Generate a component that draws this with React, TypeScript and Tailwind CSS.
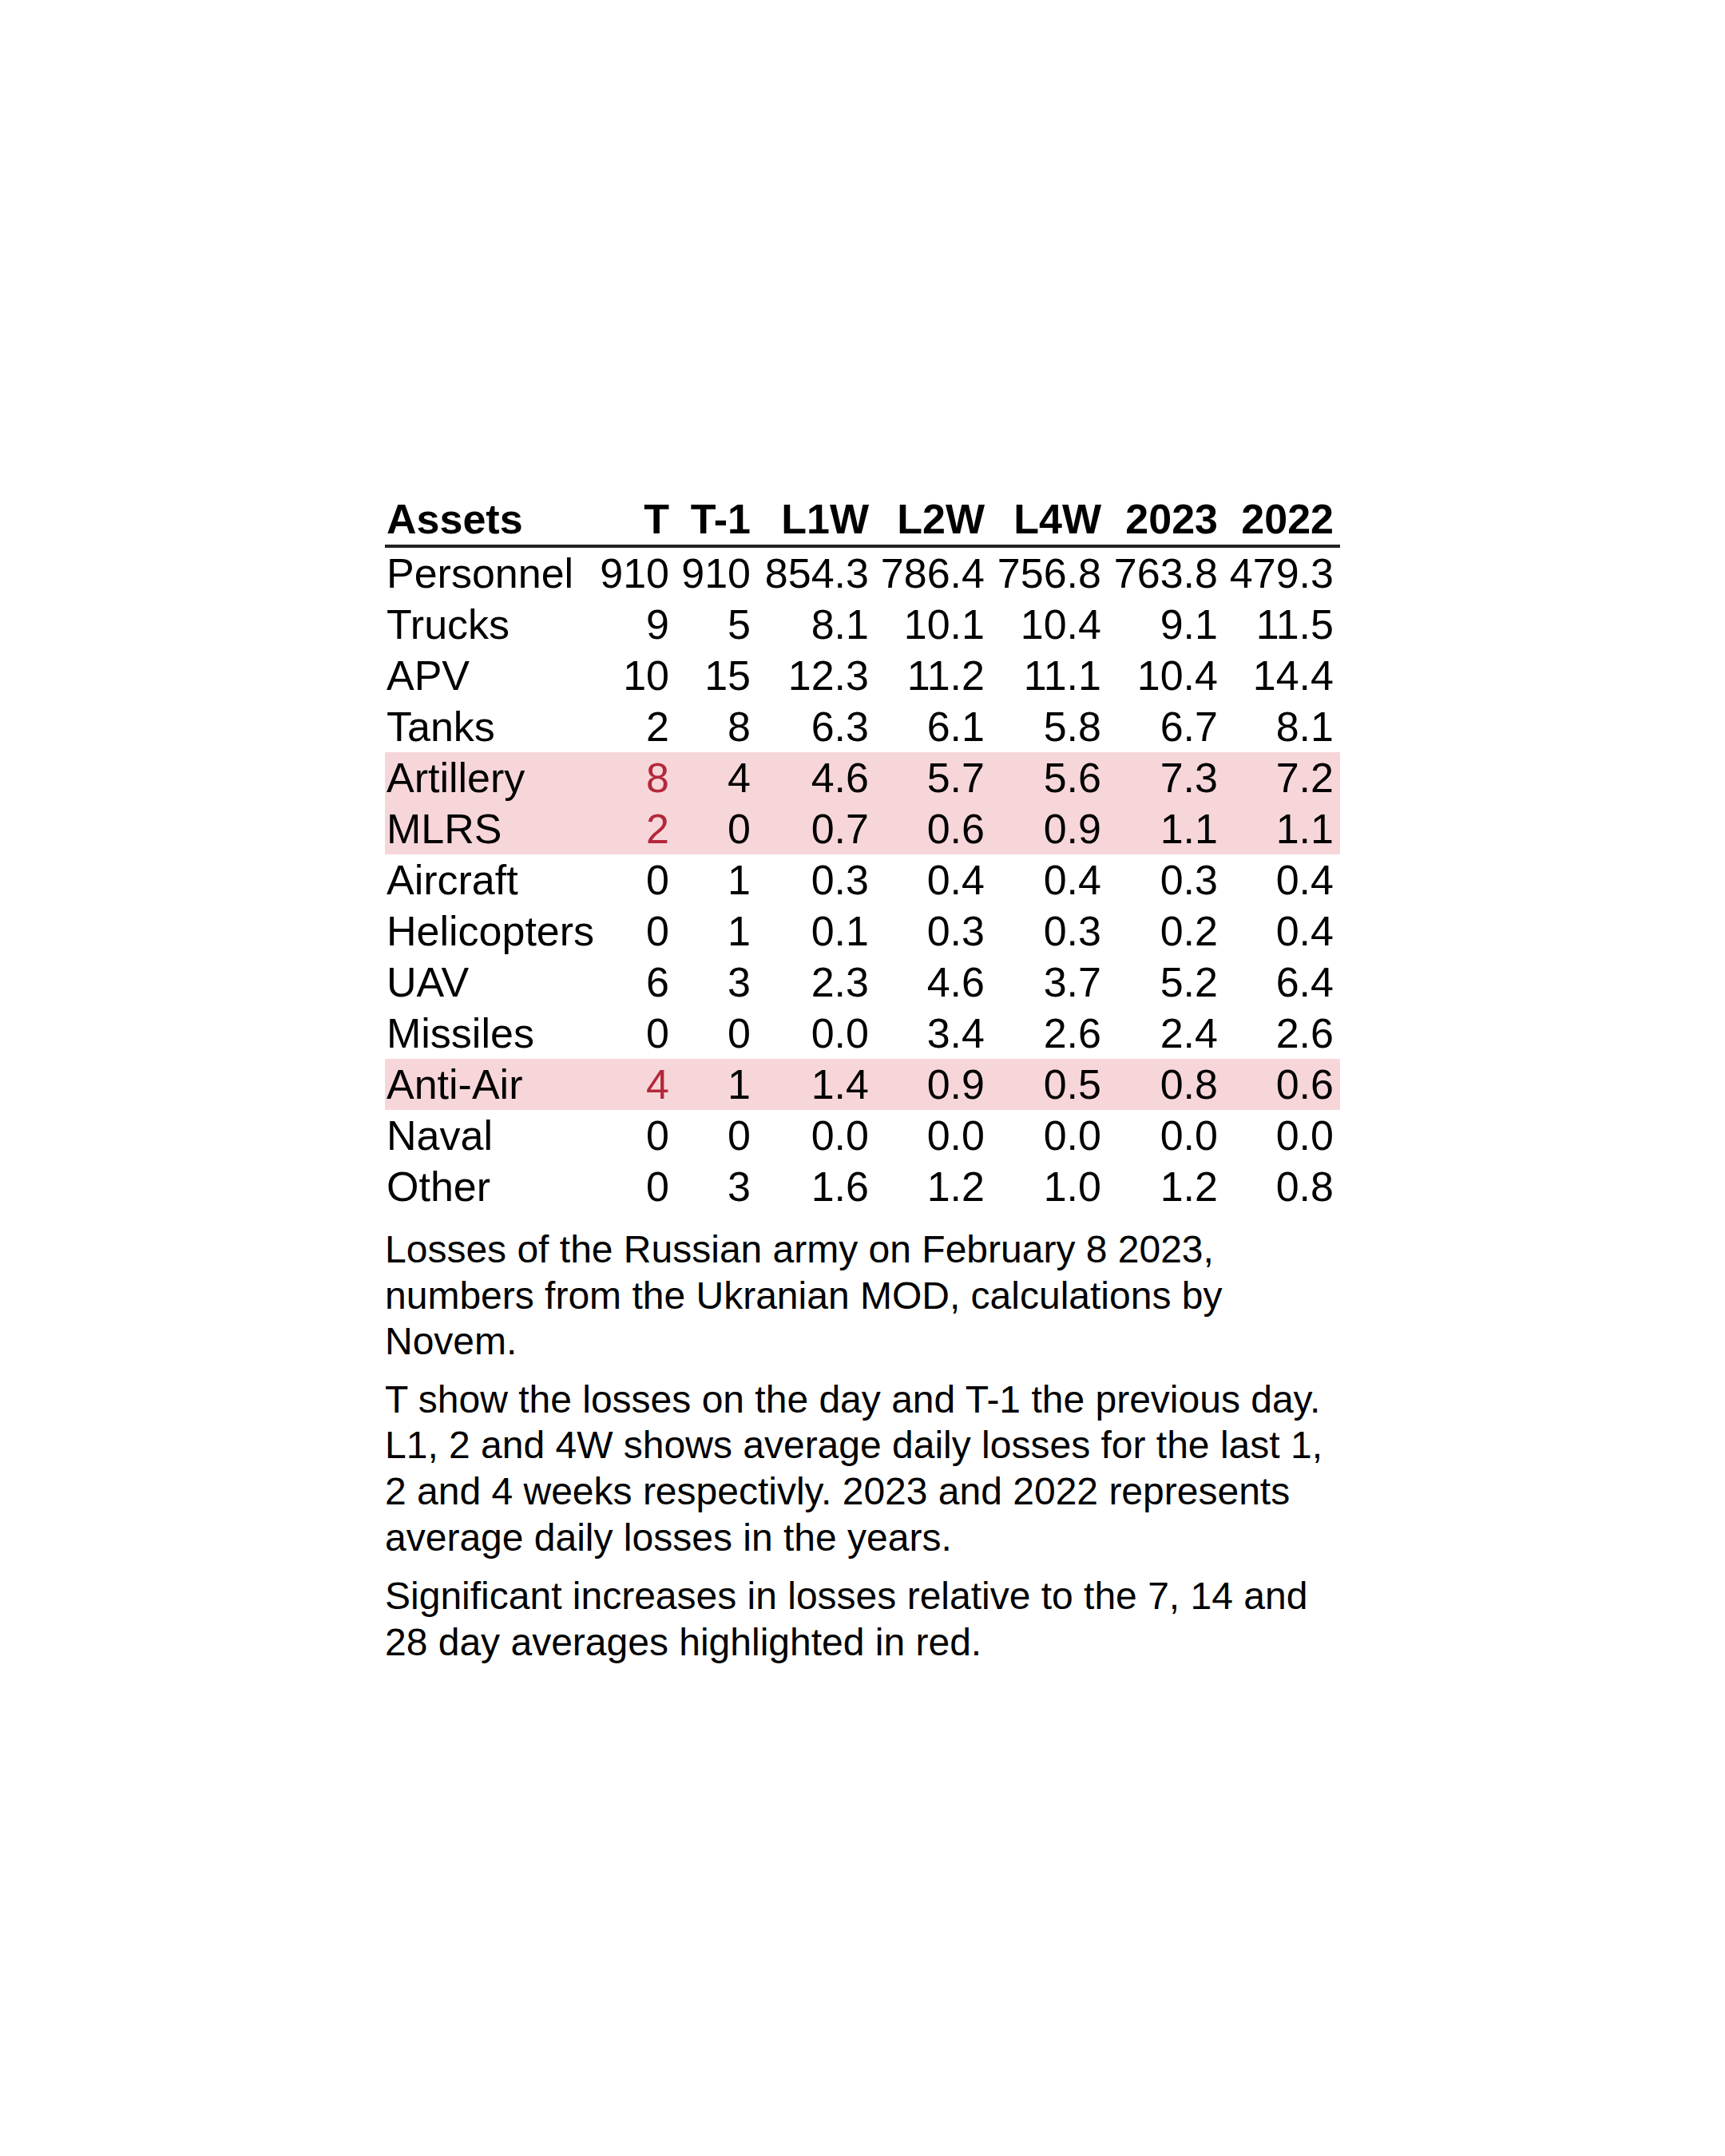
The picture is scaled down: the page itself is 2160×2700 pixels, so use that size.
import React from "react";

type Row = { name: string; vals: string[]; hl?: boolean; red?: boolean };

const rows: Row[] = [
  { name: "Personnel", vals: ["910", "910", "854.3", "786.4", "756.8", "763.8", "479.3"] },
  { name: "Trucks", vals: ["9", "5", "8.1", "10.1", "10.4", "9.1", "11.5"] },
  { name: "APV", vals: ["10", "15", "12.3", "11.2", "11.1", "10.4", "14.4"] },
  { name: "Tanks", vals: ["2", "8", "6.3", "6.1", "5.8", "6.7", "8.1"] },
  { name: "Artillery", vals: ["8", "4", "4.6", "5.7", "5.6", "7.3", "7.2"], hl: true, red: true },
  { name: "MLRS", vals: ["2", "0", "0.7", "0.6", "0.9", "1.1", "1.1"], hl: true, red: true },
  { name: "Aircraft", vals: ["0", "1", "0.3", "0.4", "0.4", "0.3", "0.4"] },
  { name: "Helicopters", vals: ["0", "1", "0.1", "0.3", "0.3", "0.2", "0.4"] },
  { name: "UAV", vals: ["6", "3", "2.3", "4.6", "3.7", "5.2", "6.4"] },
  { name: "Missiles", vals: ["0", "0", "0.0", "3.4", "2.6", "2.4", "2.6"] },
  { name: "Anti-Air", vals: ["4", "1", "1.4", "0.9", "0.5", "0.8", "0.6"], hl: true, red: true },
  { name: "Naval", vals: ["0", "0", "0.0", "0.0", "0.0", "0.0", "0.0"] },
  { name: "Other", vals: ["0", "3", "1.6", "1.2", "1.0", "1.2", "0.8"] },
];

const headers = ["T", "T-1", "L1W", "L2W", "L4W", "2023", "2022"];

const gridCols = "grid grid-cols-[262px_102px_102px_148px_145px_146px_146px_145px]";

export default function App() {
  return (
    <div className="min-h-[2700px] w-[2160px] bg-white text-black font-['Liberation_Sans',Arial,sans-serif]">
      <div className="mx-auto w-[1196px] pt-[618px]">
        <div className={`${gridCols} border-b-4 border-[#222222] text-[52px] font-bold leading-[64px]`}>
          <div className="pl-[2px] text-left">Assets</div>
          {headers.map((h) => (
            <div key={h} className="pr-[8px] text-right">
              {h}
            </div>
          ))}
        </div>
        {rows.map((r) => (
          <div
            key={r.name}
            className={`${gridCols} text-[52px] leading-[64px] ${r.hl ? "bg-[#f7d6da]" : ""}`}
          >
            <div className="pl-[2px] text-left whitespace-nowrap">{r.name}</div>
            {r.vals.map((v, i) => (
              <div
                key={i}
                className={`pr-[8px] text-right ${i === 0 && r.red ? "text-[#b4283a]" : ""}`}
              >
                {v}
              </div>
            ))}
          </div>
        ))}
        <div className="text-[48px] leading-[1.2]">
          <p className="mt-[18px]">
            <span className="block whitespace-nowrap">Losses of the Russian army on February 8 2023,</span>
            <span className="block whitespace-nowrap">numbers from the Ukranian MOD, calculations by</span>
            <span className="block whitespace-nowrap">Novem.</span>
          </p>
          <p className="mt-[15px]">
            <span className="block whitespace-nowrap">T show the losses on the day and T-1 the previous day.</span>
            <span className="block whitespace-nowrap">L1, 2 and 4W shows average daily losses for the last 1,</span>
            <span className="block whitespace-nowrap">2 and 4 weeks respectivly. 2023 and 2022 represents</span>
            <span className="block whitespace-nowrap">average daily losses in the years.</span>
          </p>
          <p className="mt-[16px]">
            <span className="block whitespace-nowrap">Significant increases in losses relative to the 7, 14 and</span>
            <span className="block whitespace-nowrap">28 day averages highlighted in red.</span>
          </p>
        </div>
      </div>
    </div>
  );
}
